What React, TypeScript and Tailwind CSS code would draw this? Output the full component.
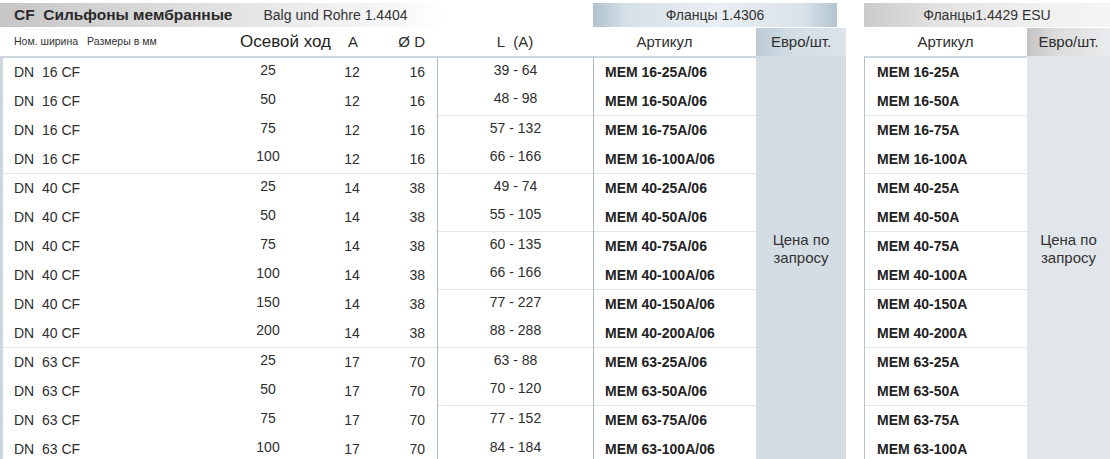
import React from "react";

type Row = { dn: string; hub: string; a: string; d: string; l: string; art1: string; art2: string };

const raw: [string, string, string, string, string][] = [
  ["16", "25", "12", "16", "39 - 64"],
  ["16", "50", "12", "16", "48 - 98"],
  ["16", "75", "12", "16", "57 - 132"],
  ["16", "100", "12", "16", "66 - 166"],
  ["40", "25", "14", "38", "49 - 74"],
  ["40", "50", "14", "38", "55 - 105"],
  ["40", "75", "14", "38", "60 - 135"],
  ["40", "100", "14", "38", "66 - 166"],
  ["40", "150", "14", "38", "77 - 227"],
  ["40", "200", "14", "38", "88 - 288"],
  ["63", "25", "17", "70", "63 - 88"],
  ["63", "50", "17", "70", "70 - 120"],
  ["63", "75", "17", "70", "77 - 152"],
  ["63", "100", "17", "70", "84 - 184"],
];

const rows: Row[] = raw.map(([dn, hub, a, d, l]) => ({
  dn: `DN\u00a0\u00a0${dn} CF`,
  hub,
  a,
  d,
  l,
  art1: `MEM ${dn}-${hub}A/06`,
  art2: `MEM ${dn}-${hub}A`,
}));

const groupEnd = (i: number) => i === 3 || i === 9;
const pairEnd = (i: number) => i % 2 === 1 && i < 13;

export default function App() {
  return (
    <div className="w-[1110px] h-[459px] overflow-hidden bg-white text-[#2e2e2e] font-['Liberation_Sans',Arial,sans-serif]">
      {/* header row 1 */}
      <div className="flex h-[28px] pt-[3px]">
        <div className="w-[593px] h-[24px] flex items-center bg-[linear-gradient(to_right,#c6c6c6,#e4e4e4_40%,#f8f8f8_68%,#ffffff_75%)]">
          <span className="pl-[14px] text-[15.5px] font-bold text-[#2a2a2a]">CF&nbsp; Сильфоны мембранные</span>
          <span className="ml-[31px] text-[14px] text-[#333]">Balg und Rohre 1.4404</span>
        </div>
        <div className="w-[244px] h-[24px] flex items-center justify-center text-[14px] text-[#333] bg-[linear-gradient(to_right,#afc2cf,#d6e0e8_14%,#e9eff3_50%,#dae3ea_86%,#b2c4d1)]">
          Фланцы 1.4306
        </div>
        <div className="w-[27px]" />
        <div className="w-[246px] h-[24px] flex items-center justify-center text-[14px] text-[#333] bg-[linear-gradient(to_right,#cbcbcb,#e2e2e2_30%,#f0f0f0_70%,#f5f5f5)]">
          Фланцы1.4429 ESU
        </div>
      </div>

      {/* header row 2 */}
      <div className="flex h-[28px] items-center">
        <div className="w-[240px] flex items-center pl-[14px] text-[10.5px] text-[#333]">
          <span>Ном. ширина</span>
          <span className="ml-[9px]">Размеры в мм</span>
        </div>
        <div className="w-[100px] text-[17px] text-[#222]">Осевой ход</div>
        <div className="w-[26px] text-center text-[15px]">A</div>
        <div className="w-[59px] text-right text-[15px]">Ø D</div>
        <div className="w-[12px]" />
        <div className="w-[156px] text-center text-[15px]">L&nbsp; (A)</div>
        <div className="w-[163px] text-center text-[15px] pr-[20px]">Артикул</div>
        <div className="w-[90px] h-full flex items-center justify-center text-[15px] bg-[linear-gradient(to_right,#bccbd6,#d3dde4_40%,#dce4ea)]">
          Евро/шт.
        </div>
        <div className="w-[18px]" />
        <div className="w-[163px] text-center text-[15px]">Артикул</div>
        <div className="w-[83px] h-full flex items-center justify-center text-[15px] bg-[linear-gradient(to_right,#c4c4c4,#dcdcdc_35%,#e9ecee)]">
          Евро/шт.
        </div>
      </div>

      {/* body */}
      <div className="flex text-[14px]">
        {/* left panel */}
        <div className="w-[437px] border-l-[3px] border-t-2 border-[#cbd6dd]">
          {rows.map((r, i) => (
            <div
              key={i}
              className={`flex h-[29px] items-center ${groupEnd(i) ? "border-b border-[#e1e8ed]" : ""}`}
            >
              <div className="w-[197px] pl-[11px] whitespace-pre">{r.dn}</div>
              <div className="w-[136px] text-center pb-[5px]">{r.hub}</div>
              <div className="w-[32px] text-center">{r.a}</div>
              <div className="w-[57px] text-right">{r.d}</div>
            </div>
          ))}
        </div>
        {/* L column */}
        <div className="w-[156px] border-l border-l-[#a9bbc7] border-t-2 border-t-[#cbd6dd]">
          {rows.map((r, i) => (
            <div
              key={i}
              className={`h-[29px] flex items-center justify-center pb-[5px] ${pairEnd(i) ? "border-b border-[#e1e8ed]" : ""}`}
            >
              {r.l}
            </div>
          ))}
        </div>
        {/* article column */}
        <div className="w-[163px] border-l border-l-[#a9bbc7] border-t-2 border-t-[#cbd6dd]">
          {rows.map((r, i) => (
            <div
              key={i}
              className={`h-[29px] flex items-center pl-[11px] font-bold text-[#222] ${pairEnd(i) ? "border-b border-[#e1e8ed]" : ""}`}
            >
              {r.art1}
            </div>
          ))}
        </div>
        {/* price */}
        <div className="w-[90px] h-[406px] bg-[#d4dde4] flex justify-center pt-[175px]">
          <div className="text-center text-[15px] leading-[18px] text-[#333]">
            Цена по
            <br />
            запросу
          </div>
        </div>
        <div className="w-[18px]" />
        {/* right article */}
        <div className="w-[163px] border-l border-l-[#b3c3ce] border-t-2 border-t-[#cbd6dd]">
          {rows.map((r, i) => (
            <div
              key={i}
              className={`h-[29px] flex items-center pl-[12px] font-bold text-[#222] ${pairEnd(i) ? "border-b border-[#e1e8ed]" : ""}`}
            >
              {r.art2}
            </div>
          ))}
        </div>
        <div className="w-[83px] h-[406px] bg-[#e0e6ea] flex justify-center pt-[175px]">
          <div className="text-center text-[15px] leading-[18px] text-[#333]">
            Цена по
            <br />
            запросу
          </div>
        </div>
      </div>
    </div>
  );
}
